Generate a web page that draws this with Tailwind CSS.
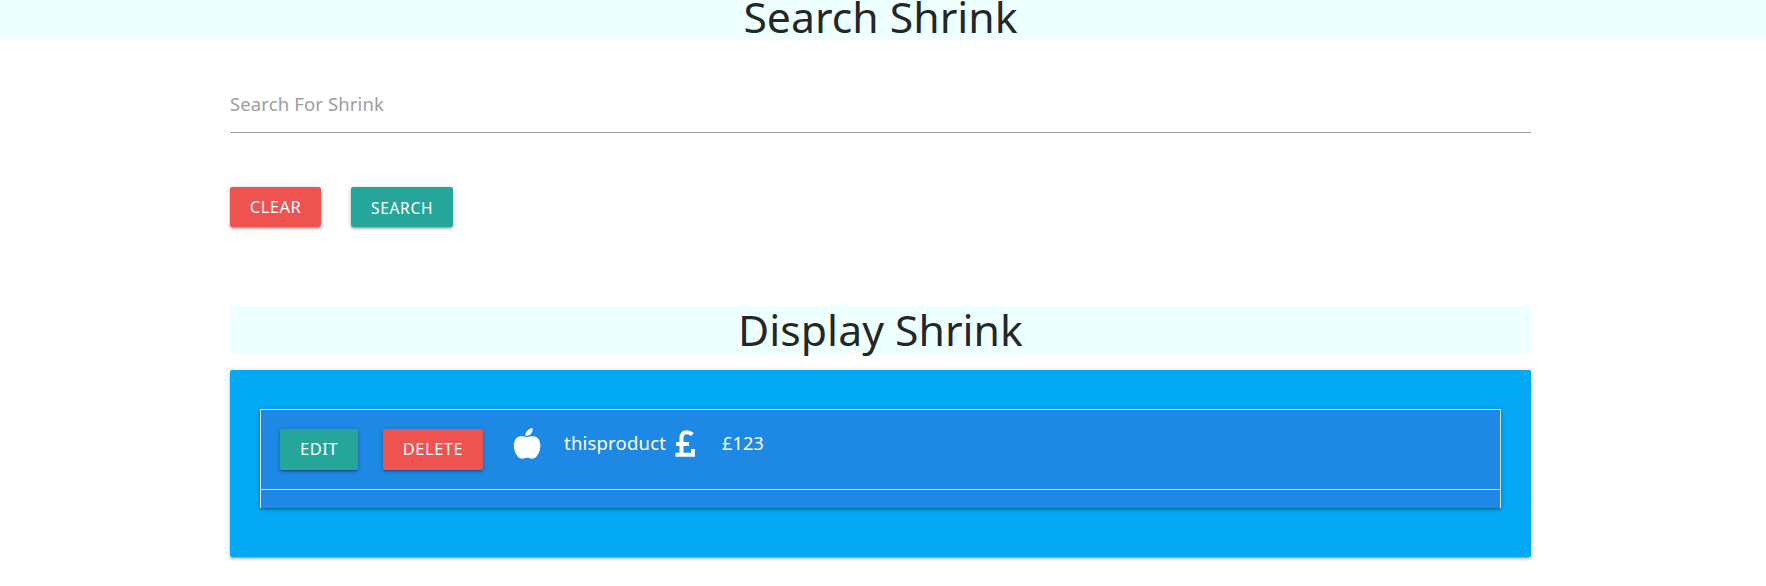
<!DOCTYPE html>
<html lang="en">
<head>
<meta charset="utf-8">
<title>Shrink</title>
<script src="https://cdn.jsdelivr.net/npm/@tailwindcss/browser@4"></script>
</head>
<body class="h-[586px] overflow-hidden bg-white font-['Noto_Sans',sans-serif] text-[15px] text-black/87">
<header class="flex h-10 items-end justify-center bg-[#eeffff] pr-[5px]">
<h1 class="h-10 text-center text-[42.750px] leading-[33px]">Search Shrink</h1>
</header>
<main class="ml-[230px] w-[1301px]">
<div class="flex h-[93px] items-center border-b border-[#9e9e9e] pt-9">
<label class="text-[18.500px] leading-6 tracking-[0.12px] text-[#9e9e9e]">Search For Shrink</label>
</div>
<div class="mt-[54px] flex gap-[30px] text-white">
<button class="h-10 w-[91px] rounded-[2px] bg-[#ef5350] text-[16.500px] leading-10 tracking-[0.5px] shadow-[0_2px_2px_0_rgba(0,0,0,0.14),0_3px_1px_-2px_rgba(0,0,0,0.12),0_1px_5px_0_rgba(0,0,0,0.2)]">CLEAR</button>
<button class="h-10 w-[102px] rounded-[2px] bg-[#26a69a] pt-0.5 text-[15.500px] leading-[38px] tracking-[0.7px] shadow-[0_2px_2px_0_rgba(0,0,0,0.14),0_3px_1px_-2px_rgba(0,0,0,0.12),0_1px_5px_0_rgba(0,0,0,0.2)]">SEARCH</button>
</div>
<h2 class="mt-[79px] h-[47px] bg-[#eeffff] text-center text-[42.750px] leading-[47px]">Display Shrink</h2>
<section class="mt-[17px] h-[187px] rounded-[2px] bg-[#03a9f4] px-[30px] pt-[39px] shadow-[0_2px_2px_0_rgba(0,0,0,0.14),0_3px_1px_-2px_rgba(0,0,0,0.12),0_1px_5px_0_rgba(0,0,0,0.2)]">
<div class="h-[99px] border-x border-t border-[#e0e0e0] bg-[#1e88e5] text-white shadow-[0_2px_2px_0_rgba(0,0,0,0.14),0_3px_1px_-2px_rgba(0,0,0,0.12),0_1px_5px_0_rgba(0,0,0,0.2)]">
<div class="flex h-20 items-start border-b border-[#e0e0e0] pt-[19px] pl-[19px]">
<button class="h-[41px] w-[78px] rounded-[2px] bg-[#26a69a] pb-px text-[16.500px] leading-10 tracking-[0.5px] shadow-[0_2px_2px_0_rgba(0,0,0,0.14),0_3px_1px_-2px_rgba(0,0,0,0.12),0_1px_5px_0_rgba(0,0,0,0.2)]">EDIT</button>
<button class="ml-[25px] h-[41px] w-[100px] rounded-[2px] bg-[#ef5350] pb-px text-[16.500px] leading-10 tracking-[0.5px] shadow-[0_2px_2px_0_rgba(0,0,0,0.14),0_3px_1px_-2px_rgba(0,0,0,0.12),0_1px_5px_0_rgba(0,0,0,0.2)]">DELETE</button>
<svg class="-mt-px ml-[30px] h-8 w-7 shrink-0" viewBox="0 0 28 32" fill="currentColor"><path d="M12.500 8C12.100 4.500 14.500 1 19.500 0C20.500 4.500 17 8 12.500 8ZM14 9.200C17 8 21.500 7.500 24.300 9.800C29 14 28 23.500 23.500 28.500C21.300 31 18.500 31.200 16 30C14.800 29.500 13.400 29.500 12.200 30C9.700 31.200 7 31 4.800 28.500C0.200 23.500 -0.800 14 3.900 9.800C7 7.500 11 8 14 9.200Z"/></svg>
<span class="ml-[23px] w-[111px] text-[18.500px] leading-7 tracking-[0.2px]">thisproduct</span>
<svg class="mt-px h-[27px] w-5 shrink-0" viewBox="0 0 20 27" fill="none" stroke="currentColor" stroke-width="4"><path d="M17.500 4.600C15.500 2.800 13.500 2.200 11.600 2.200C8 2.200 6.500 4.500 6.500 8V25M1 14H14M0.500 24.700H18V19"/></svg>
<span class="ml-[27px] text-[18.300px] leading-7">£123</span>
</div>
</div>
</section>
</main>
</body>
</html>
